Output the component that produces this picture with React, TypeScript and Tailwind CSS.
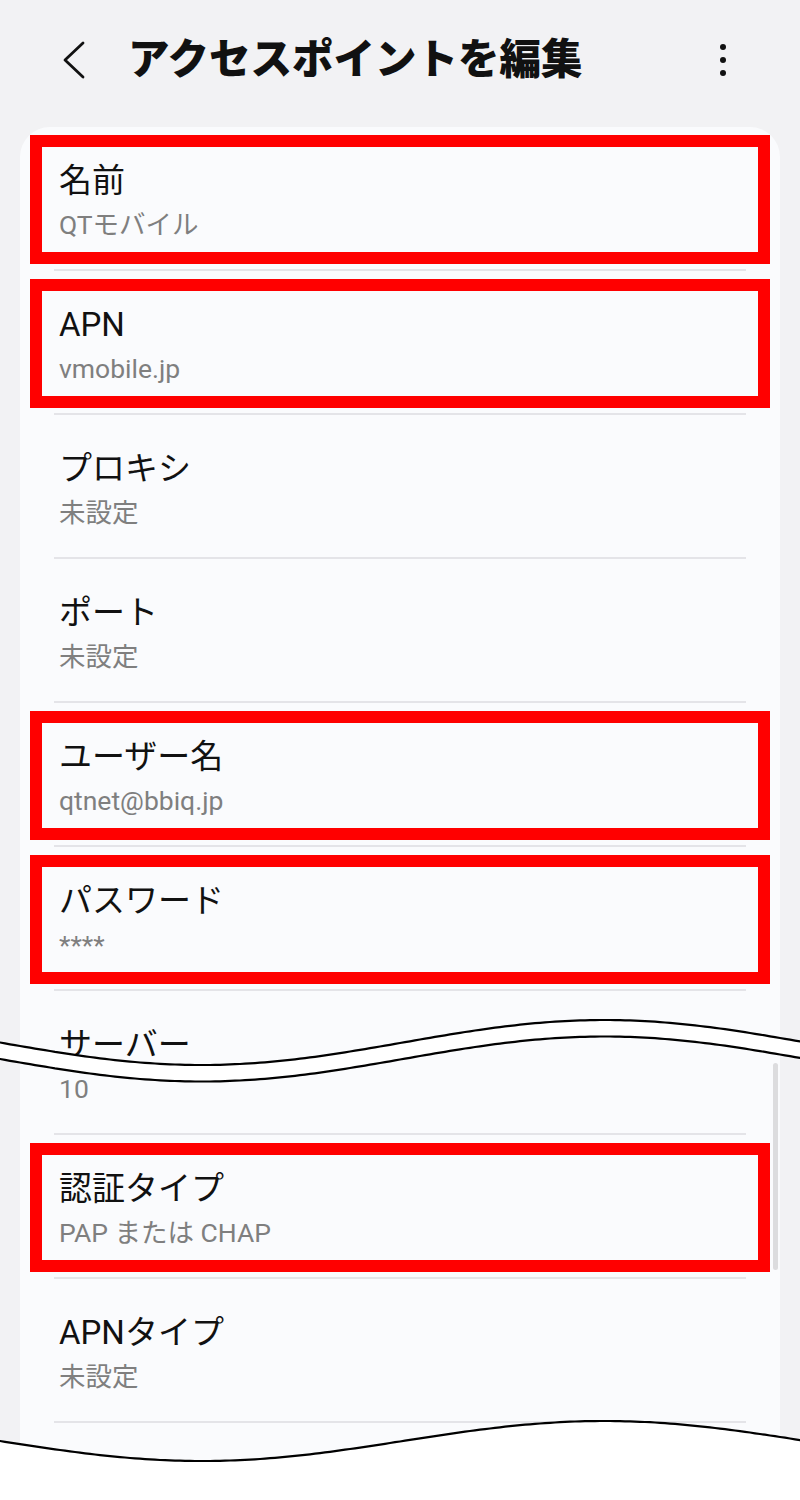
const font = "font-['Roboto','Noto_Sans_CJK_JP',sans-serif]";

type Item = { label: string; value: string; marked?: boolean };

const items: Item[] = [
  { label: '名前', value: 'QTモバイル', marked: true },
  { label: 'APN', value: 'vmobile.jp', marked: true },
  { label: 'プロキシ', value: '未設定' },
  { label: 'ポート', value: '未設定' },
  { label: 'ユーザー名', value: 'qtnet@bbiq.jp', marked: true },
  { label: 'パスワード', value: '****', marked: true },
  { label: 'サーバー', value: '10' },
  { label: '認証タイプ', value: 'PAP または CHAP', marked: true },
  { label: 'APNタイプ', value: '未設定' },
];

// sine curve across the page, used for the "cut" marks
const wave = (base: number, amp: number) => {
  const pts: [number, number][] = [];
  for (let x = -10; x <= 810; x += 5) {
    pts.push([x, base + amp * Math.sin((2 * Math.PI * x) / 806)]);
  }
  return pts;
};

const toPath = (pts: [number, number][]) =>
  pts.map(([x, y], i) => `${i ? 'L' : 'M'}${x.toFixed(1)} ${y.toFixed(1)}`).join(' ');

const CutMarks = () => {
  const top = wave(1042.5, 22.5);
  const bottom = wave(1059, 22.5);
  const edge = wave(1441, 20);
  const band =
    toPath(top) +
    ' ' +
    [...bottom].reverse().map(([x, y]) => `L${x.toFixed(1)} ${y.toFixed(1)}`).join(' ') +
    ' Z';
  const tail = toPath(edge) + ' L810 1510 L-10 1510 Z';
  return (
    <svg className="pointer-events-none absolute left-0 top-0" width="800" height="1500" viewBox="0 0 800 1500">
      <path d={band} fill="#ffffff" />
      <path d={toPath(top)} fill="none" stroke="#000" strokeWidth="2.2" />
      <path d={toPath(bottom)} fill="none" stroke="#000" strokeWidth="2.2" />
      <path d={tail} fill="#ffffff" />
      <path d={toPath(edge)} fill="none" stroke="#000" strokeWidth="2.2" />
    </svg>
  );
};

const Row = ({ item }: { item: Item }) => (
  <div className="relative mx-[34px] h-[144px] border-b-2 border-[#e4e4e8] pl-[5px] pt-[34px]">
    <div className="text-[33px] leading-[40px] text-[#111111]">{item.label}</div>
    <div className="mt-[7px] text-[26.5px] leading-[34px] text-[#7f7f7f]">{item.value}</div>
    {item.marked && (
      <div className="absolute left-[-24px] right-[-24px] top-[8px] h-[129px] border-[12px] border-[#ff0000]" />
    )}
  </div>
);

export default function App() {
  return (
    <div className={`relative h-[1500px] w-[800px] overflow-hidden bg-[#f2f2f4] ${font}`}>
      <header className="flex h-[120px] items-center pl-[62px] pr-[74px]">
        <svg width="24" height="40" viewBox="0 0 24 40" className="shrink-0">
          <polyline points="21,3 3,20 21,37" fill="none" stroke="#111" strokeWidth="2.8" strokeLinecap="round" strokeLinejoin="round" />
        </svg>
        <h1 className="ml-[42px] text-[41.5px] font-black leading-none text-[#111111]">アクセスポイントを編集</h1>
        <div className="ml-auto flex flex-col items-center gap-[7px]">
          <span className="h-[6px] w-[6px] rounded-full bg-[#111]" />
          <span className="h-[6px] w-[6px] rounded-full bg-[#111]" />
          <span className="h-[6px] w-[6px] rounded-full bg-[#111]" />
        </div>
      </header>

      <main className="relative mx-[20px] mt-[7px] h-[1380px] rounded-t-[30px] bg-[#fafbfd]">
        {items.map((item) => (
          <Row key={item.label} item={item} />
        ))}
        <div className="absolute right-[2px] top-[936px] h-[207px] w-[5px] rounded-full bg-[#dcdcde]" />
      </main>

      <CutMarks />
    </div>
  );
}
